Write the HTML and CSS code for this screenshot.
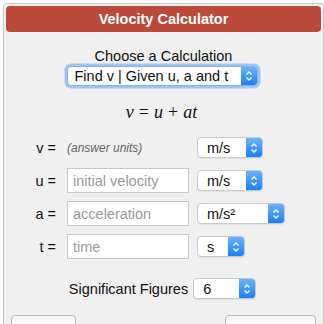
FILE: index.html
```html
<!DOCTYPE html>
<html>
<head>
<meta charset="utf-8">
<link rel="stylesheet" href="styles.css">
</head>
<body>
<div class="calc">
  <div class="header">Velocity Calculator</div>
  <div class="choose">Choose a Calculation</div>
  <div class="sel-wrap">
    <div class="select main focus"><span class="val">Find v | Given u, a and t</span><span class="arrow"><svg viewBox="0 0 8 12" width="8" height="12"><path d="M1.5 4.5 L4 2 L6.5 4.5 M1.5 7.5 L4 10 L6.5 7.5" fill="none" stroke="#fff" stroke-width="1.3"/></svg></span></div>
  </div>
  <div class="formula"><i>v</i><span class="op">=</span><i>u</i><span class="op">+</span><i>at</i></div>
  <div class="rows">
    <div class="row">
      <div class="lbl">v =</div>
      <div class="note">(answer units)</div>
      <div class="select w66"><span class="val">m/s</span><span class="arrow"><svg viewBox="0 0 8 12" width="8" height="12"><path d="M1.5 4.5 L4 2 L6.5 4.5 M1.5 7.5 L4 10 L6.5 7.5" fill="none" stroke="#fff" stroke-width="1.3"/></svg></span></div>
    </div>
    <div class="row">
      <div class="lbl">u =</div>
      <div class="input"><span class="ph">initial velocity</span></div>
      <div class="select w66"><span class="val">m/s</span><span class="arrow"><svg viewBox="0 0 8 12" width="8" height="12"><path d="M1.5 4.5 L4 2 L6.5 4.5 M1.5 7.5 L4 10 L6.5 7.5" fill="none" stroke="#fff" stroke-width="1.3"/></svg></span></div>
    </div>
    <div class="row">
      <div class="lbl">a =</div>
      <div class="input"><span class="ph">acceleration</span></div>
      <div class="select w88"><span class="val">m/s²</span><span class="arrow"><svg viewBox="0 0 8 12" width="8" height="12"><path d="M1.5 4.5 L4 2 L6.5 4.5 M1.5 7.5 L4 10 L6.5 7.5" fill="none" stroke="#fff" stroke-width="1.3"/></svg></span></div>
    </div>
    <div class="row">
      <div class="lbl">t =</div>
      <div class="input"><span class="ph">time</span></div>
      <div class="select w48"><span class="val">s</span><span class="arrow"><svg viewBox="0 0 8 12" width="8" height="12"><path d="M1.5 4.5 L4 2 L6.5 4.5 M1.5 7.5 L4 10 L6.5 7.5" fill="none" stroke="#fff" stroke-width="1.3"/></svg></span></div>
    </div>
  </div>
  <div class="sig">
    <span class="sig-lbl">Significant Figures</span>
    <div class="select w63"><span class="val">6</span><span class="arrow"><svg viewBox="0 0 8 12" width="8" height="12"><path d="M1.5 4.5 L4 2 L6.5 4.5 M1.5 7.5 L4 10 L6.5 7.5" fill="none" stroke="#fff" stroke-width="1.3"/></svg></span></div>
  </div>
  <div class="buttons">
    <div class="btn left"></div>
    <div class="btn right"></div>
  </div>
</div>
</body>
</html>
```
FILE: styles.css
```css
html, body { margin: 0; padding: 0; background: #fff; }
html { height: 324px; overflow: hidden; }
body { font-family: "Liberation Sans", Arial, sans-serif; font-size: 14px; color: #111; height: 324px; overflow: hidden; }
.calc {
  margin: 3px 0 0 3px;
  width: 315px;
  height: 330px;
  border: 1px solid #c8c8c8;
  border-radius: 3px;
  background: #f0f0f0;
  padding: 2px;
  box-sizing: content-box;
  display: flex;
  flex-direction: column;
  overflow: hidden;
}
.header {
  height: 26px;
  line-height: 26px;
  background: #bb4a3b;
  border-radius: 4px;
  color: #fff;
  font-weight: bold;
  font-size: 14.5px;
  text-align: center;
}
.choose { margin-top: 16px; text-align: center; line-height: 17px; font-size: 14.5px; }
.sel-wrap { display: flex; justify-content: center; margin-top: 1px; padding-right: 3px; }
.select {
  position: relative;
  height: 21px;
  box-sizing: border-box;
  background: #fff;
  border: 1px solid #c9c9c9;
  border-radius: 4px;
  display: flex;
  align-items: center;
  font-size: 14.5px;
  overflow: hidden;
  box-shadow: 0 1px 1px rgba(0,0,0,0.06);
}
.select .val { flex: 1; padding-left: 9px; white-space: nowrap; }
.select .arrow {
  width: 16px;
  align-self: stretch;
  background: linear-gradient(#6bb3fb, #1c7ff6);
  display: flex;
  align-items: center;
  justify-content: center;
}
.select.main { width: 191px; height: 20px; }
.select.main .val { padding-left: 7px; }
.select.focus { box-shadow: 0 0 0 2.5px #9fc6f3; border-color: #86b0e8; }
.formula {
  margin-top: 16px;
  line-height: 20px;
  text-align: center;
  font-family: "Liberation Serif", "Times New Roman", serif;
  font-size: 18px;
  padding-right: 4px;
}
.formula i { font-style: italic; }
.formula .op { margin: 0 5px; }
.rows { margin-top: 13px; display: flex; flex-direction: column; gap: 8px; }
.row { display: flex; align-items: center; height: 25px; }
.lbl { width: 50px; text-align: right; padding-right: 11px; box-sizing: content-box; font-size: 14.5px; }
.note { width: 130px; font-style: italic; color: #666; font-size: 12px; }
.input {
  width: 122px;
  height: 25px;
  box-sizing: border-box;
  background: #fff;
  border: 1px solid #c8c8c8;
  margin-right: 8px;
  display: flex;
  align-items: center;
  padding-left: 5px;
  font-size: 14.5px;
}
.ph { color: #9a9a9a; }
.w66 { width: 66px; }
.w88 { width: 88px; }
.w48 { width: 48px; }
.w63 { width: 63px; }
.sig { margin-top: 19px; display: flex; justify-content: center; align-items: center; height: 21px; gap: 5px; padding-right: 2px; font-size: 14.5px; }
.buttons { margin-top: 16px; display: flex; justify-content: space-between; padding: 0 5px 0 5px; }
.btn { height: 24px; flex: none; border: 1px solid #b8b8b8; border-radius: 4px; background: #f8f8f8; box-sizing: border-box; }
.btn.left { width: 65px; }
.btn.right { width: 91px; }
```
